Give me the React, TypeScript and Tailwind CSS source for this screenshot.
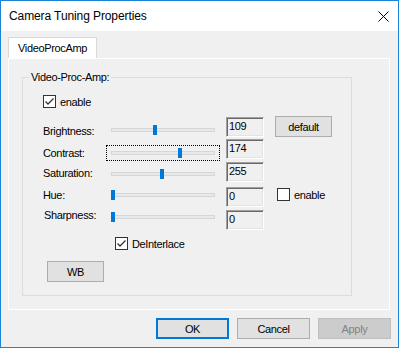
import React from "react";

function CheckBox({ checked }: { checked?: boolean }) {
  return (
    <div className="w-[13px] h-[13px] border border-[#333333] bg-white flex items-center justify-center shrink-0">
      {checked && (
        <svg width="11" height="11" viewBox="0 0 11 11">
          <polyline points="1.5,5.5 4,8 9.5,2.5" fill="none" stroke="#333333" strokeWidth="1.3" />
        </svg>
      )}
    </div>
  );
}

function Slider({ pos, focus }: { pos: number; focus?: boolean }) {
  return (
    <div
      className={
        focus
          ? "relative w-[114px] h-[16px] flex items-center px-[4px] border border-dotted border-black"
          : "relative w-[114px] h-[16px] flex items-center px-[5px]"
      }
    >
      <div className="w-full h-[4px] bg-[#e7eaea] border border-[#d6d6d6]" />
      <div
        className="absolute top-1/2 -translate-y-1/2 w-[4px] h-[10px] bg-[#0078d7]"
        style={{ left: (focus ? 4 : 5) + pos }}
      />
    </div>
  );
}

function Edit({ value, className }: { value: string; className: string }) {
  return (
    <div
      className={
        "w-[38px] h-[20px] bg-[#f0f0f0] border border-t-[#a0a0a0] border-l-[#a0a0a0] border-b-white border-r-white shadow-[inset_1px_1px_0_#696969,inset_-1px_-1px_0_#e3e3e3] pl-[2px] pt-[2px] leading-[12px] " +
        className
      }
    >
      {value}
    </div>
  );
}

export default function App() {
  return (
    <div className="w-[399px] h-[348px] border border-[#1883d7] bg-[#f0f0f0] flex flex-col text-[11px] tracking-[-0.35px] text-black font-['Liberation_Sans',Arial,sans-serif] overflow-hidden">
      {/* title bar */}
      <div className="h-[30px] bg-white flex items-start justify-between shrink-0">
        <span className="pl-[8px] text-[12px] tracking-[-0.1px] leading-[30px]">Camera Tuning Properties</span>
        <svg width="11" height="11" viewBox="0 0 11 11" className="mt-[10px] mr-[9px]">
          <line x1="0.5" y1="0.5" x2="10.5" y2="10.5" stroke="#000" strokeWidth="1" />
          <line x1="10.5" y1="0.5" x2="0.5" y2="10.5" stroke="#000" strokeWidth="1" />
        </svg>
      </div>

      {/* tab */}
      <div className="ml-[7px] mt-[6px] w-[89px] h-[21px] border-t border-l border-r border-[#d9d9d9] bg-white pl-[9px] pt-[4px] leading-[12px] shrink-0">
        VideoProcAmp
      </div>

      {/* panel */}
      <div className="ml-[7px] w-[382px] h-[252px] border border-white shrink-0 flex flex-col">
        <div className="relative ml-[13px] mt-[18px] w-[330px] h-[219px] border border-[#dcdcdc] flex flex-col">
          <span className="absolute -top-[7px] left-[6px] px-[2px] bg-[#f0f0f0] leading-[12px]">Video-Proc-Amp:</span>

          <div className="mt-[17px] h-[13px] pl-[20px] flex items-center gap-[4px]">
            <CheckBox checked />
            <span className="leading-[12px]">enable</span>
          </div>

          {/* Brightness */}
          <div className="mt-[8px] h-[23px] pl-[20px] flex items-start">
            <span className="w-[63px] mt-[9px] leading-[12px]">Brightness:</span>
            <div className="mt-[6px]">
              <Slider pos={42} />
            </div>
            <Edit value="109" className="mt-[1px] ml-[6px]" />
            <div className="ml-[11px] w-[57px] h-[21px] bg-[#e1e1e1] border border-[#adadad] flex items-center justify-center leading-[12px]">
              default
            </div>
          </div>

          {/* Contrast */}
          <div className="h-[23px] pl-[20px] flex items-start">
            <span className="w-[63px] mt-[8px] leading-[12px]">Contrast:</span>
            <div className="mt-[6px]">
              <Slider pos={67} focus />
            </div>
            <Edit value="174" className="ml-[6px]" />
          </div>

          {/* Saturation */}
          <div className="h-[25px] pl-[20px] flex items-start">
            <span className="w-[63px] mt-[5px] leading-[12px]">Saturation:</span>
            <div className="mt-[4px]">
              <Slider pos={49} />
            </div>
            <Edit value="255" className="ml-[6px]" />
          </div>

          {/* Hue */}
          <div className="h-[22px] pl-[20px] flex items-start">
            <span className="w-[63px] mt-[2px] leading-[12px]">Hue:</span>
            <div className="mt-[0px]">
              <Slider pos={0} />
            </div>
            <Edit value="0" className="ml-[6px]" />
            <div className="ml-[13px] mt-[1px] flex items-center gap-[4px]">
              <CheckBox />
              <span className="leading-[12px]">enable</span>
            </div>
          </div>

          {/* Sharpness */}
          <div className="h-[28px] pl-[20px] flex items-start">
            <span className="w-[63px] pl-[1px] leading-[12px]">Sharpness:</span>
            <div>
              <Slider pos={0} />
            </div>
            <Edit value="0" className="mt-[1px] ml-[6px]" />
          </div>

          <div className="h-[13px] pl-[92px] flex items-center gap-[4px]">
            <CheckBox checked />
            <span className="leading-[12px]">DeInterlace</span>
          </div>

          <div className="mt-[11px] ml-[24px] w-[57px] h-[21px] bg-[#e1e1e1] border border-[#adadad] flex items-center justify-center leading-[12px]">
            WB
          </div>
        </div>
      </div>

      {/* bottom buttons */}
      <div className="mt-[8px] pr-[7px] flex justify-end gap-[8px] shrink-0">
        <div className="w-[73px] h-[21px] bg-[#e1e1e1] border-2 border-[#0078d7] flex items-center justify-center leading-[12px]">
          OK
        </div>
        <div className="w-[73px] h-[21px] bg-[#e1e1e1] border border-[#adadad] flex items-center justify-center leading-[12px]">
          Cancel
        </div>
        <div className="w-[73px] h-[21px] bg-[#cccccc] border border-[#bfbfbf] text-[#838383] flex items-center justify-center leading-[12px]">
          Apply
        </div>
      </div>
    </div>
  );
}
